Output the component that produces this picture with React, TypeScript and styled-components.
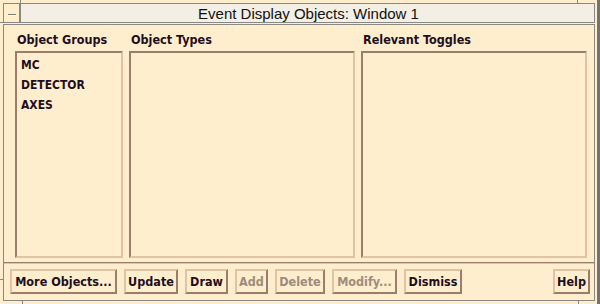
import React from "react";
import styled, { createGlobalStyle } from "styled-components";

const GlobalStyle = createGlobalStyle`
  html, body {
    margin: 0;
    padding: 0;
    background: #feeece;
  }
`;

const cream = "#feeece";
const frameGray = "#8a8883";
const shadow = "#9c7d6b";
const highlight = "#e2c2a7";
const ink = "#1e0e1e";

const Window = styled.div`
  position: relative;
  width: 600px;
  height: 304px;
  box-sizing: border-box;
  background: ${cream};
  border-right: 3px solid #77736c;
  padding: 3px 2px 3px 3px;
  display: flex;
  flex-direction: column;
  font-family: "DejaVu Sans", "Liberation Sans", sans-serif;
  font-stretch: condensed;
  color: ${ink};
  overflow: hidden;
`;

const Tick = styled.span<{ $x: number; $y: number; $w: number; $h: number }>`
  position: absolute;
  left: ${(p) => p.$x}px;
  top: ${(p) => p.$y}px;
  width: ${(p) => p.$w}px;
  height: ${(p) => p.$h}px;
  background: ${frameGray};
`;

const TitleRow = styled.div`
  display: flex;
  height: 20px;
`;

const MenuButton = styled.div`
  width: 18px;
  box-sizing: border-box;
  border: 1px solid ${frameGray};
  border-right-width: 2px;
  background: ${cream};
  display: flex;
  align-items: center;
  justify-content: center;
`;

const Dash = styled.span`
  display: block;
  width: 8px;
  height: 1px;
  margin-top: 3px;
  margin-left: 1px;
  background: #7d7a74;
  border-bottom: 1px solid #fffaf0;
`;

const TitleBar = styled.div`
  flex: 1;
  box-sizing: border-box;
  background: #f3efe4;
  border: 1px solid ${frameGray};
  border-left: none;
  display: flex;
  align-items: center;
  justify-content: center;
  font-family: "Liberation Sans", Arial, sans-serif;
  font-stretch: normal;
  font-size: 15px;
  color: #111;
  padding-left: 2px;
`;

const Panel = styled.div`
  flex: 1;
  box-sizing: border-box;
  margin-top: 1px;
  border: 1px solid ${frameGray};
  display: flex;
  flex-direction: column;
`;

const Columns = styled.div`
  display: grid;
  grid-template-columns: 108px 226px 226px;
  column-gap: 6px;
  padding: 8px 0 0 11px;
  height: 233px;
  box-sizing: border-box;
`;

const Column = styled.div`
  display: flex;
  flex-direction: column;
`;

const Label = styled.div`
  font-size: 12.5px;
  font-weight: bold;
  line-height: 14px;
  padding-left: 2px;
  margin-bottom: 4px;
  white-space: nowrap;
`;

const ListBox = styled.div`
  flex: 1;
  box-sizing: border-box;
  border-style: solid;
  border-width: 2px;
  border-color: ${shadow} ${highlight} ${highlight} ${shadow};
  padding: 2px 0 0 4px;
`;

const ListItem = styled.div`
  font-size: 12px;
  font-weight: bold;
  line-height: 20px;
  white-space: nowrap;
`;

const Separator = styled.div`
  height: 0;
  margin-top: 4px;
  border-top: 1px solid ${shadow};
  border-bottom: 1px solid ${highlight};
`;

const ButtonRow = styled.div`
  display: flex;
  gap: 7px;
  padding: 5px 4px 0 6px;
`;

const Button = styled.div<{ $w: number; $disabled?: boolean; $push?: boolean }>`
  width: ${(p) => p.$w}px;
  height: 25px;
  box-sizing: border-box;
  border-style: solid;
  border-width: 2px;
  border-color: ${highlight} ${shadow} ${shadow} ${highlight};
  display: flex;
  align-items: center;
  justify-content: center;
  font-size: 12.5px;
  font-weight: bold;
  white-space: nowrap;
  color: ${(p) => (p.$disabled ? "#a08b7b" : ink)};
  margin-left: ${(p) => (p.$push ? "auto" : "0")};
`;

const groups = ["MC", "DETECTOR", "AXES"];

const buttons: { label: string; w: number; disabled?: boolean }[] = [
  { label: "More Objects...", w: 107 },
  { label: "Update", w: 54 },
  { label: "Draw", w: 43 },
  { label: "Add", w: 33, disabled: true },
  { label: "Delete", w: 50, disabled: true },
  { label: "Modify...", w: 65, disabled: true },
  { label: "Dismiss", w: 58 },
];

const App: React.FC = () => {
  return (
    <>
      <GlobalStyle />
      <Window>
        <Tick $x={20} $y={0} $w={1} $h={3} />
        <Tick $x={577} $y={0} $w={1} $h={3} />
        <Tick $x={0} $y={22} $w={3} $h={1} />
        <Tick $x={0} $y={279} $w={3} $h={1} />
        <Tick $x={22} $y={301} $w={1} $h={3} />
        <Tick $x={578} $y={301} $w={1} $h={3} />
        <TitleRow>
          <MenuButton>
            <Dash />
          </MenuButton>
          <TitleBar>Event Display Objects: Window 1</TitleBar>
        </TitleRow>
        <Panel>
          <Columns>
            <Column>
              <Label>Object Groups</Label>
              <ListBox>
                {groups.map((g) => (
                  <ListItem key={g}>{g}</ListItem>
                ))}
              </ListBox>
            </Column>
            <Column>
              <Label>Object Types</Label>
              <ListBox />
            </Column>
            <Column>
              <Label>Relevant Toggles</Label>
              <ListBox />
            </Column>
          </Columns>
          <Separator />
          <ButtonRow>
            {buttons.map((b) => (
              <Button key={b.label} $w={b.w} $disabled={b.disabled}>
                {b.label}
              </Button>
            ))}
            <Button $w={37} $push>
              Help
            </Button>
          </ButtonRow>
        </Panel>
      </Window>
    </>
  );
};

export default App;
